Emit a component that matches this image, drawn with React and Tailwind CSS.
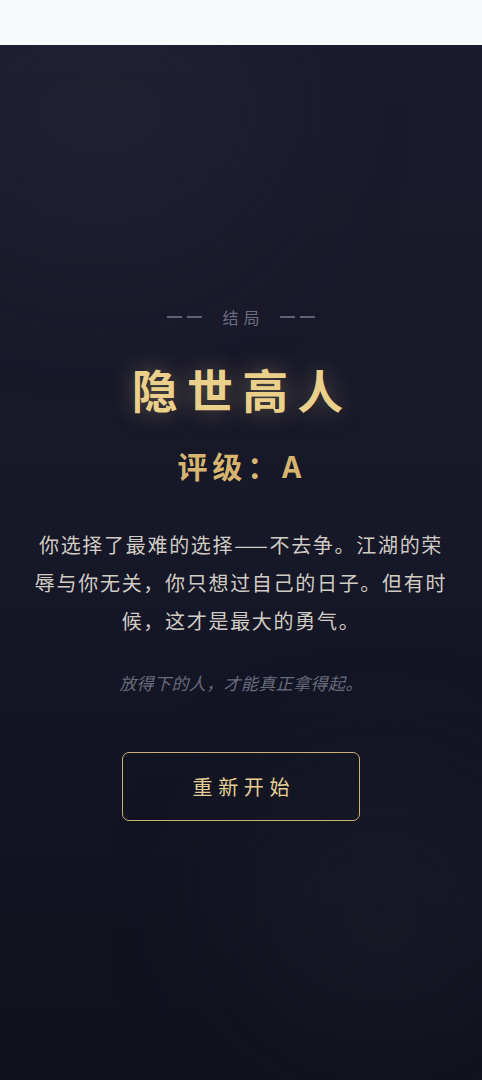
import React from "react";

const FONT = { fontFamily: '"Noto Sans CJK SC", "Noto Sans", sans-serif' };

function Dashes() {
  return (
    <div className="flex items-center gap-[5px]">
      <span className="w-[15px] h-[1.5px] bg-[#5f6275]" />
      <span className="w-[15px] h-[1.5px] bg-[#5f6275]" />
    </div>
  );
}

export default function App() {
  return (
    <div className="flex flex-col bg-[#f8f9fb]" style={FONT}>
      {/* top strip */}
      <div className="h-[45px] shrink-0 bg-[#f8f9fb]" />

      {/* ending screen */}
      <div className="relative h-[1035px] overflow-hidden bg-gradient-to-b from-[#1c1b2d] via-[#161727] to-[#10111c]">
        <div className="absolute -left-20 -top-20 w-[360px] h-[300px] rounded-full bg-[#2a2a40]/30 blur-3xl" />
        <div className="absolute right-[-40px] bottom-[40px] w-[280px] h-[260px] rounded-full bg-[#1e2030]/40 blur-3xl" />

        <div className="relative h-[1035px] flex flex-col items-center justify-center pt-[5px] px-[32px] text-center">
          <div className="flex items-center gap-[16px] h-[16px]">
            <Dashes />
            <p className="text-[16px] tracking-[0.3em] pl-[0.3em] text-[#6c6f82] leading-none">结局</p>
            <Dashes />
          </div>

          <h1 className="mt-[40px] text-[46px] font-bold leading-none tracking-[0.2em] pl-[0.05em] text-[#ead08a] [text-shadow:0_0_24px_rgba(234,208,138,0.35)]">
            隐世高人
          </h1>

          <p className="mt-[39px] text-[30px] font-bold leading-none tracking-[0.16em] pl-[0.05em] text-[#d6b56e]">
            评级：A
          </p>

          <p className="mt-[46px] text-[20px] leading-[38px] tracking-[1.7px] text-[#d0ccc3]">
            你选择了最难的选择——不去争。江湖的荣辱与你无关，你只想过自己的日子。但有时候，这才是最大的勇气。
          </p>

          <p className="mt-[31px] text-[17px] leading-[24px] tracking-[0.4px] italic text-[#686b7c]">放得下的人，才能真正拿得起。</p>

          <button className="mt-[57px] w-[238px] h-[69px] rounded-[7px] border border-[#c9b27a] text-[20px] tracking-[0.28em] pl-[0.28em] text-[#e3cf95] bg-transparent">
            重新开始
          </button>
        </div>
      </div>
    </div>
  );
}
